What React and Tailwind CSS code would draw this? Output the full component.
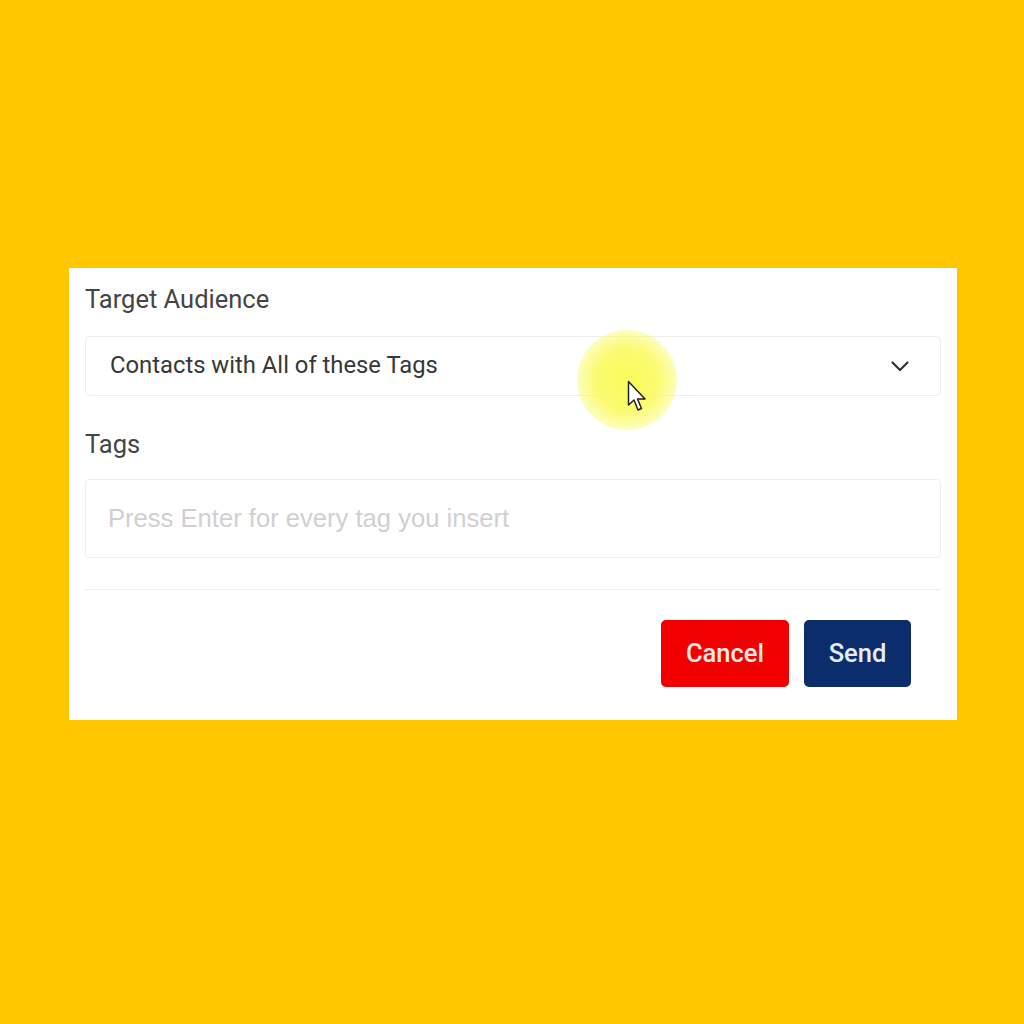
import React from "react";

export default function App() {
  return (
    <div className="w-[1024px] h-[1024px] bg-[#ffc700] pt-[268px] pl-[69px] relative overflow-hidden" style={{ fontFamily: "Roboto, 'Liberation Sans', sans-serif" }}>
      <div className="w-[888px] bg-white px-4 pt-[15px] pb-[33px] flex flex-col">
        <div className="h-[32px] leading-[32px] text-[25.5px] text-[#454545] mb-[21px]">Target Audience</div>
        <div className="h-[60px] border border-[#ececec] rounded-[5px] flex items-center justify-between pl-[24px] pr-[28px]">
          <span className="text-[23.8px] text-[#383838]">Contacts with All of these Tags</span>
          <svg width="24" height="24" viewBox="0 0 24 24" fill="none" stroke="#333" strokeWidth="2.2" strokeLinecap="round" strokeLinejoin="round">
            <path d="M4.5 8.5l7.5 7.5 7.5-7.5" />
          </svg>
        </div>
        <div className="h-[32px] leading-[32px] text-[25.5px] text-[#454545] mt-[32px] mb-[19px]">Tags</div>
        <div className="h-[79px] border border-[#efefef] rounded-[4px] flex items-center pl-[22px]">
          <span className="text-[25.6px] text-[#d0d0d0]" style={{ fontFamily: "'Liberation Sans', Arial, sans-serif" }}>Press Enter for every tag you insert</span>
        </div>
        <div className="h-px bg-[#ececec] mt-[31px]" />
        <div className="flex justify-end gap-[15px] pr-[30px] mt-[30px]">
          <button className="w-[128px] h-[67px] rounded-[5px] bg-[#f20000] text-[#fde8e8] text-[25.5px] font-medium">Cancel</button>
          <button className="w-[107px] h-[67px] rounded-[5px] bg-[#0b2d6b] text-[#e6ecf6] text-[25.5px] font-medium">Send</button>
        </div>
      </div>
      <div className="absolute left-[577px] top-[330px] w-[100px] h-[100px] rounded-full" style={{ background: "radial-gradient(circle, rgba(250,250,80,0.95) 0%, rgba(250,250,90,0.85) 45%, rgba(252,252,130,0.4) 75%, rgba(255,255,160,0) 100%)" }} />
      <svg className="absolute left-[627px] top-[380px]" width="22" height="34" viewBox="0 0 22 34">
        <path d="M1.5 1.5 L1.5 25 L7 20 L11 30 L14.5 28.5 L10.5 19 L18 19 Z" fill="white" stroke="#222" strokeWidth="1.5" strokeLinejoin="round" />
      </svg>
    </div>
  );
}
